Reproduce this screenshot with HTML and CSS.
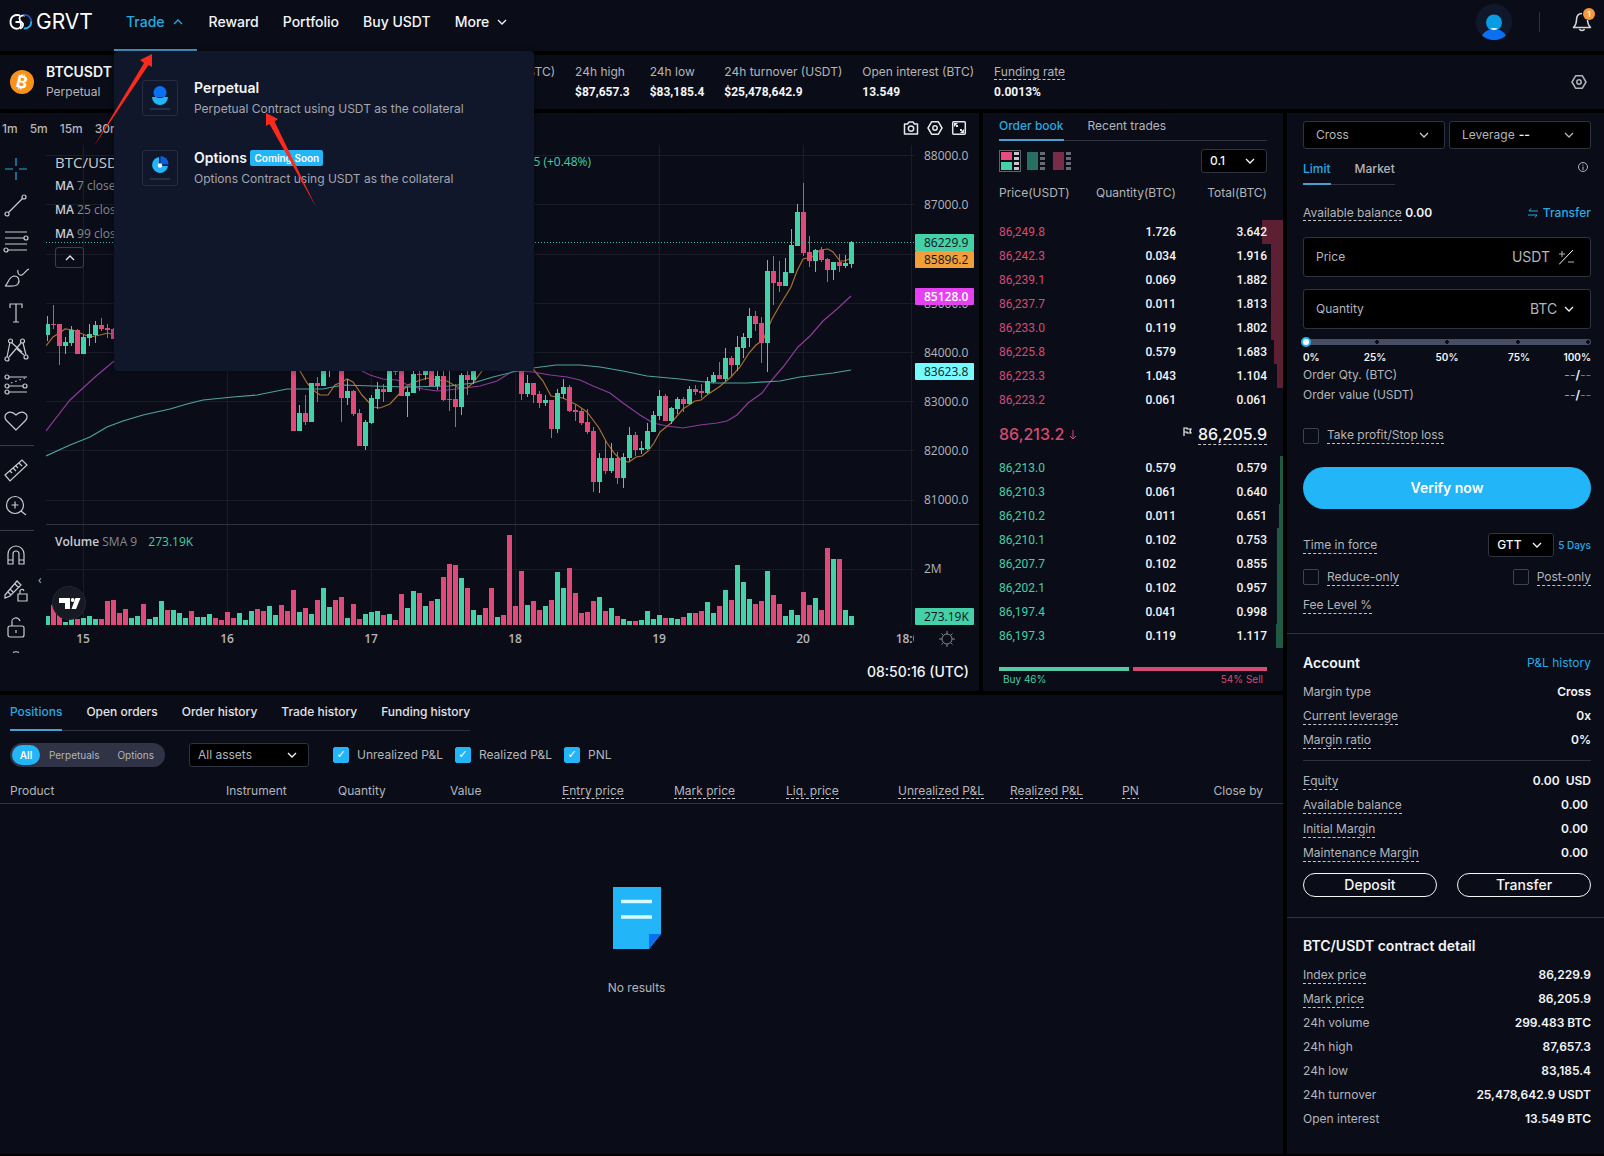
FILE: index.html
```html
<!DOCTYPE html>
<html lang="en">
<head>
    <meta charset="UTF-8">
    <meta name="viewport" content="width=device-width, initial-scale=1.0">
    <title>BTCUSDT Perpetual | GRVT</title>
    <link rel="stylesheet" href="styles.css">
</head>
<body>

    <!-- shared icons -->
    <svg class="sprite" aria-hidden="true">
        <symbol id="chevron" viewBox="0 0 10 10"><path d="M1 3l4 4 4-4" fill="none" stroke="currentColor" stroke-width="1.3"/></symbol>
        <symbol id="chevron-up" viewBox="0 0 10 10"><path d="M1 7l4-4 4 4" fill="none" stroke="currentColor" stroke-width="1.3"/></symbol>
        <symbol id="hex" viewBox="0 0 16 16"><path d="M4.6 1.8h6.8L15 8l-3.6 6.2H4.6L1 8z" fill="none" stroke="currentColor" stroke-width="1.5" stroke-linejoin="round"/><circle cx="8" cy="8" r="2.2" fill="none" stroke="currentColor" stroke-width="1.5"/></symbol>
    </svg>

    <header class="topbar">
        <a class="logo" href="#" aria-label="GRVT home">
            <svg width="24" height="18" viewBox="0 0 24 18" fill="none" stroke-width="1.8">
                <path d="M11 2.300C5 1 1.500 4 1.500 9s4 7.500 8 6.500c3-.8 3-4.500 1.500-6.500H6.500" stroke="#fff"/>
                <path d="M16 2.500c-5-.5-6.500 2-5 5 1.500 2.500 4 2 3 5-.5 1.800-1.500 2.700-3 3.200" stroke="#fff"/>
                <path d="M14.500 2C20 1.500 22.300 5 22.300 9" stroke="#2a4fb0"/>
                <path d="M22.300 8.500c0 4.500-3 7-7.500 7" stroke="#28b4f0"/>
            </svg>
            <span>GRVT</span>
        </a>
        <nav class="nav">
            <a class="nav-item active" href="#">Trade <svg width="10" height="10"><use href="#chevron-up"/></svg></a>
            <a class="nav-item" href="#">Reward</a>
            <a class="nav-item" href="#">Portfolio</a>
            <a class="nav-item" href="#">Buy USDT</a>
            <a class="nav-item" href="#">More <svg width="10" height="10"><use href="#chevron"/></svg></a>
        </nav>
        <div class="user">
            <button class="avatar" aria-label="Account">
                <svg width="36" height="36" viewBox="0 0 36 36">
                    <circle cx="18" cy="18" r="18" fill="#11182b"/>
                    <path d="M6 31.500a14 14 0 0 1 24 0A18 18 0 0 1 6 31.500z" fill="#0a6ff0"/>
                    <circle cx="18" cy="18.500" r="8" fill="#069ce6"/>
                    <path d="M14 24.800a12 12 0 0 1 8 0 8 8 0 0 1-8 0z" fill="#fff"/>
                </svg>
            </button>
            <span class="divider"></span>
            <button class="bell" aria-label="Notifications">
                <svg width="20" height="22" viewBox="0 0 20 22" fill="none" stroke="#d5d7dc" stroke-width="1.5" stroke-linejoin="round">
                    <path d="M10 2.500c-4 0-5.500 3-5.500 6.500 0 4-1 5.500-3 7.500h17c-2-2-3-3.500-3-7.500"/>
                    <path d="M7.500 18c.6 2 4.400 2 5 0"/>
                </svg>
                <span class="badge">1</span>
            </button>
        </div>
    </header>

    <section class="ticker">
        <div class="pair">
            <svg width="24" height="24" viewBox="0 0 24 24">
                <circle cx="12" cy="12" r="12" fill="#f7931a"/>
                <text class="btc-sign" x="12" y="18" text-anchor="middle" transform="rotate(14 12 12)">₿</text>
            </svg>
            <div>
                <h1>BTCUSDT</h1>
                <p>Perpetual</p>
            </div>
        </div>
        <dl class="stats">
            <div><dt>24h volume (BTC)</dt><dd>299.483</dd></div>
            <div><dt>24h high</dt><dd>$87,657.3</dd></div>
            <div><dt>24h low</dt><dd>$83,185.4</dd></div>
            <div><dt>24h turnover (USDT)</dt><dd>$25,478,642.9</dd></div>
            <div><dt>Open interest (BTC)</dt><dd>13.549</dd></div>
            <div><dt><span class="hint">Funding rate</span></dt><dd>0.0013%</dd></div>
        </dl>
        <button class="icon-button" aria-label="Layout settings"><svg width="16" height="16"><use href="#hex"/></svg></button>
    </section>

    <main class="workspace">

        <section class="panel chart">
            <div class="chart-toolbar">
                <div class="intervals">
                    <button>1m</button><button>5m</button><button>15m</button><button>30m</button>
                </div>
                <div class="chart-actions">
                    <button aria-label="Snapshot">
                        <svg width="16" height="16" viewBox="0 0 16 16" fill="none" stroke="currentColor" stroke-width="1.5" stroke-linejoin="round"><path d="M1.500 4h3L6 2h4l1.500 2h3v10h-13z"/><circle cx="8" cy="8.600" r="2.700"/></svg>
                    </button>
                    <button aria-label="Chart settings"><svg width="16" height="16"><use href="#hex"/></svg></button>
                    <button aria-label="Full screen">
                        <svg width="16" height="16" viewBox="0 0 16 16"><rect x="1.700" y="1.700" width="12.600" height="12.600" rx="1" fill="none" stroke="currentColor" stroke-width="1.500"/><path d="M3 3h4L3 7zM13 13H9l4-4zM5 5h2v2H5zM9 9h2v2H9z" fill="currentColor"/></svg>
                    </button>
                </div>
            </div>

            <div class="chart-body">
                <div class="tools">
                    <button class="blue" aria-label="Cross"><svg viewBox="0 0 28 28"><path d="M14 3v8M14 17v8M3 14h8M17 14h8"/></svg></button>
                    <button aria-label="Trend line"><svg viewBox="0 0 28 28"><path d="M6.500 21.500L20.500 7.500"/><circle cx="5" cy="23" r="2"/><circle cx="22" cy="6" r="2"/></svg></button>
                    <button aria-label="Fib retracement"><svg viewBox="0 0 28 28"><path d="M3 5h22M3 11h19M3 17h22M6 23h19"/><circle cx="24" cy="11" r="2"/><circle cx="4" cy="23" r="2"/></svg></button>
                    <button aria-label="Brush"><svg viewBox="0 0 28 28"><path d="M3 23c3-1 3-9 9-10 5 0 6 5 4 8-2 3-7 2-13 2zM16 7c-1 3 1 6 4 5 3-2 4-5 7-6"/></svg></button>
                    <button aria-label="Text"><svg viewBox="0 0 28 28"><path d="M8 9V5h12v4M14 5v18M11 23h6"/></svg></button>
                    <button aria-label="Patterns"><svg viewBox="0 0 28 28"><path d="M5 22L8 7M10 8l10 9M19 8L7 22M21 8l3 12M22 20l-7-6"/><circle cx="8.500" cy="6" r="2"/><circle cx="20.500" cy="6" r="2"/><circle cx="5" cy="24" r="2"/><circle cx="24" cy="22" r="2"/></svg></button>
                    <button aria-label="Forecast"><svg viewBox="0 0 28 28"><path d="M7 6h18M7 15h14M7 21h18"/><path d="M9 12l14-5" stroke-dasharray="1.500 3"/><circle cx="5" cy="6" r="2"/><circle cx="5" cy="15" r="2"/><circle cx="23" cy="15" r="2"/><circle cx="5" cy="21" r="2"/></svg></button>
                    <button aria-label="Icons"><svg viewBox="0 0 28 28"><path d="M14 23L4.500 13.500C-.5 8 7.500 1.500 14 8c6.500-6.500 14.500 0 9.500 5.500z"/></svg></button>
                    <hr>
                    <button aria-label="Measure"><svg viewBox="0 0 28 28"><path d="M3 19L20 4l5 5L8 25zM8 15l2 2M11 12l3 3M14 10l2 2M17 7l3 3"/></svg></button>
                    <button aria-label="Zoom in"><svg viewBox="0 0 28 28"><circle cx="13" cy="13" r="8.500"/><path d="M19 19l5 4M13 9.500v7M9.500 13h7"/></svg></button>
                    <hr>
                    <button aria-label="Magnet"><svg viewBox="0 0 28 28"><path d="M6 23V13a8 8 0 0 1 16 0v10h-5V13a3 3 0 0 0-6 0v10zM6 19h5M17 19h5"/></svg></button>
                    <button aria-label="Stay in drawing mode"><svg viewBox="0 0 28 28"><path d="M3 18L15 4l4 4L8 19l-5 2zM6 15l3 3M8 12l3 3M13 7l4 4M16 17h9v7h-9zM18 17v-2a2 2 0 0 1 4-1"/></svg></button>
                    <button aria-label="Lock drawings"><svg viewBox="0 0 28 28"><rect x="6" y="13" width="16" height="11" rx="2"/><path d="M10 13v-3a4 4 0 0 1 8-2M14 17v3"/></svg></button>
                    <button class="cut" aria-label="Hide drawings"><svg viewBox="0 0 28 28"><path d="M11 7.500c2-1 4-1 6 0"/></svg></button>
                </div>

                <svg id="plot" class="plot" role="img" aria-label="BTC/USDT candles and volume"></svg>
                <svg id="axis" class="axis" aria-hidden="true"></svg>

                <div class="legend">
                    <div class="legend-title"><span>BTC/USDT</span><span class="up">+412.5 (+0.48%)</span></div>
                    <div class="legend-row"><b>MA</b> 7 close</div>
                    <div class="legend-row"><b>MA</b> 25 close</div>
                    <div class="legend-row"><b>MA</b> 99 close</div>
                    <button aria-label="Collapse legend"><svg width="10" height="10"><use href="#chevron-up"/></svg></button>
                </div>
                <div class="volume-legend"><b>Volume</b> SMA 9 <span class="up">273.19K</span></div>
                <span class="collapse">‹</span>
                <svg class="tv-logo" width="34" height="34" viewBox="0 0 34 34">
                    <circle cx="17" cy="17" r="16.500" fill="#171a23" stroke="#252833"/>
                    <rect x="7" y="12" width="11" height="5" fill="#fff"/>
                    <rect x="13" y="12" width="5" height="11" fill="#fff"/>
                    <circle cx="20.700" cy="14" r="1.900" fill="#fff"/>
                    <path d="M23.500 12h5L24 23h-4.500z" fill="#fff"/>
                </svg>
            </div>
            <div class="clock">08:50:16 (UTC)</div>
        </section>

        <section class="panel book">
            <div class="tabs book-tabs">
                <button class="active">Order book</button>
                <button>Recent trades</button>
            </div>
            <div class="book-controls">
                <button class="mode active" aria-label="Both sides"><i class="stack"><b class="red"></b><b class="green"></b></i><i class="dots"></i></button>
                <button class="mode" aria-label="Bids"><i class="stack"><b class="green"></b></i><i class="dots"></i></button>
                <button class="mode" aria-label="Asks"><i class="stack"><b class="red"></b></i><i class="dots"></i></button>
                <span class="select tick">
                    <select aria-label="Price grouping"><option>0.1</option></select>
                    <svg width="10" height="10"><use href="#chevron"/></svg>
                </span>
            </div>
            <table class="levels">
                <thead>
                    <tr><th>Price(USDT)</th><th>Quantity(BTC)</th><th>Total(BTC)</th></tr>
                </thead>
                <tbody id="asks" class="asks"></tbody>
            </table>
            <div class="mid">
                <span class="last">86,213.2 <svg width="8" height="10" viewBox="0 0 8 10" fill="none" stroke="currentColor"><path d="M4 0v9M1 6l3 3 3-3"/></svg></span>
                <span class="mark"><svg width="9" height="9" viewBox="0 0 9 9" fill="none" stroke="currentColor" stroke-width="1.2"><path d="M1 9V1h3v1h4L7 4l1 2H4V5H1"/></svg><span class="hint">86,205.9</span></span>
            </div>
            <table class="levels">
                <tbody id="bids" class="bids"></tbody>
            </table>
            <div class="ratio"><span class="buy"></span><span class="sell"></span></div>
            <div class="ratio-labels"><span class="up">Buy 46%</span><span class="down">54% Sell</span></div>
        </section>

        <aside class="panel side">
            <form class="order">
                <div class="pair-row">
                    <span class="select wide">
                        <select aria-label="Margin mode"><option>Cross</option></select>
                        <svg width="10" height="10"><use href="#chevron"/></svg>
                    </span>
                    <button type="button" class="drop">Leverage <b>--</b><svg width="10" height="10"><use href="#chevron"/></svg></button>
                </div>
                <div class="type-row">
                    <div class="tabs">
                        <button type="button" class="active">Limit</button>
                        <button type="button">Market</button>
                    </div>
                    <svg class="info" width="10" height="10" viewBox="0 0 10 10" fill="none" stroke="currentColor"><circle cx="5" cy="5" r="4.500"/><path d="M5 4.500V8M5 2.500v1"/></svg>
                </div>
                <div class="line balance">
                    <span><span class="hint">Available balance</span> <b>0.00</b></span>
                    <a href="#"><svg width="10" height="10" viewBox="0 0 10 10" fill="none" stroke="currentColor"><path d="M10 3H1l2-2.500M0 7h9L7 9.500"/></svg>Transfer</a>
                </div>
                <div class="field">
                    <input type="text" placeholder="Price" aria-label="Price">
                    <span>USDT</span>
                    <svg width="15" height="15" viewBox="0 0 15 15" fill="none" stroke="currentColor"><path d="M0 14.500L14 0" stroke="#fff"/><path d="M0 4h6M3 1v6M9 12h6"/></svg>
                </div>
                <div class="field">
                    <input type="text" placeholder="Quantity" aria-label="Quantity">
                    <span class="select unit">
                        <select aria-label="Unit"><option>BTC</option></select>
                        <svg width="10" height="10"><use href="#chevron"/></svg>
                    </span>
                </div>
                <input class="slider" type="range" min="0" max="100" value="0" aria-label="Order size">
                <div class="marks"><span>0%</span><span>25%</span><span>50%</span><span>75%</span><span>100%</span></div>
                <div class="line small-line"><span>Order Qty. (BTC)</span><b><i class="up">--</i>/<i class="down">--</i></b></div>
                <div class="line small-line"><span>Order value (USDT)</span><b><i class="up">--</i>/<i class="down">--</i></b></div>
                <label class="check tpsl"><input type="checkbox"><span class="hint">Take profit/Stop loss</span></label>
                <button type="button" class="verify">Verify now</button>
                <div class="line force">
                    <span class="hint">Time in force</span>
                    <span class="force-value">
                        <span class="select tick">
                            <select aria-label="Time in force"><option>GTT</option></select>
                            <svg width="10" height="10"><use href="#chevron"/></svg>
                        </span>
                        <a href="#">5 Days</a>
                    </span>
                </div>
                <div class="line only">
                    <label class="check"><input type="checkbox"><span class="hint">Reduce-only</span></label>
                    <label class="check"><input type="checkbox"><span class="hint">Post-only</span></label>
                </div>
                <div class="line"><span class="hint">Fee Level %</span></div>
            </form>

            <section class="block">
                <div class="block-title"><h2>Account</h2><a href="#">P&amp;L history</a></div>
                <div class="line"><span>Margin type</span><b>Cross</b></div>
                <div class="line"><span class="hint">Current leverage</span><b>0x</b></div>
                <div class="line"><span class="hint">Margin ratio</span><b>0%</b></div>
                <hr>
                <div class="line"><span class="hint">Equity</span><b>0.00&nbsp; USD</b></div>
                <div class="line"><span class="hint">Available balance</span><b>0.00&nbsp;</b></div>
                <div class="line"><span class="hint">Initial Margin</span><b>0.00&nbsp;</b></div>
                <div class="line"><span class="hint">Maintenance Margin</span><b>0.00&nbsp;</b></div>
                <div class="actions"><button>Deposit</button><button>Transfer</button></div>
            </section>

            <section class="block">
                <div class="block-title"><h2>BTC/USDT contract detail</h2></div>
                <div class="line"><span class="hint">Index price</span><b>86,229.9</b></div>
                <div class="line"><span class="hint">Mark price</span><b>86,205.9</b></div>
                <div class="line"><span>24h volume</span><b>299.483 BTC</b></div>
                <div class="line"><span>24h high</span><b>87,657.3</b></div>
                <div class="line"><span>24h low</span><b>83,185.4</b></div>
                <div class="line"><span>24h turnover</span><b>25,478,642.9 USDT</b></div>
                <div class="line"><span>Open interest</span><b>13.549 BTC</b></div>
            </section>
        </aside>

        <section class="panel positions">
            <div class="tabs position-tabs">
                <button class="active">Positions</button>
                <button>Open orders</button>
                <button>Order history</button>
                <button>Trade history</button>
                <button>Funding history</button>
            </div>
            <div class="filters">
                <div class="segment">
                    <button class="active">All</button><button>Perpetuals</button><button>Options</button>
                </div>
                <span class="select assets">
                    <select aria-label="Assets"><option>All assets</option></select>
                    <svg width="10" height="10"><use href="#chevron"/></svg>
                </span>
                <label class="check"><input type="checkbox" checked>Unrealized P&amp;L</label>
                <label class="check"><input type="checkbox" checked>Realized P&amp;L</label>
                <label class="check"><input type="checkbox" checked>PNL</label>
            </div>
            <table class="position-table">
                <thead>
                    <tr>
                        <th class="product">Product</th>
                        <th>Instrument</th>
                        <th>Quantity</th>
                        <th>Value</th>
                        <th><span class="hint">Entry price</span></th>
                        <th><span class="hint">Mark price</span></th>
                        <th><span class="hint">Liq. price</span></th>
                        <th><span class="hint">Unrealized P&amp;L</span></th>
                        <th><span class="hint">Realized P&amp;L</span></th>
                        <th class="pnl"><span class="hint">PNL</span></th>
                        <th class="close">Close by</th>
                    </tr>
                </thead>
            </table>
            <div class="empty">
                <svg width="48" height="62" viewBox="0 0 48 62">
                    <path d="M0 0h48v47L36 62H0z" fill="#22b5f7"/>
                    <path d="M36 47h12L36 62z" fill="#0a6ff0"/>
                    <path d="M8 14.500h31M8 30h31" stroke="#d8fbff" stroke-width="3.500"/>
                </svg>
                <p>No results</p>
            </div>
        </section>
    </main>

    <!-- Trade menu -->
    <div class="menu">
        <a class="menu-item" href="#">
            <span class="menu-icon">
                <svg width="20" height="24" viewBox="0 0 20 24"><circle cx="10" cy="6.500" r="6.500" fill="#0a6ff0"/><path d="M2 11h16a8 8 0 0 1-16 0z" fill="#22b5f7"/><path d="M6 11h8c-2 1.300-6 1.300-8 0z" fill="#02153c"/><path d="M0 23h20" stroke="#1f3048" stroke-width="2"/></svg>
            </span>
            <span><strong>Perpetual</strong><small>Perpetual Contract using USDT as the collateral</small></span>
        </a>
        <a class="menu-item" href="#">
            <span class="menu-icon">
                <svg width="20" height="24" viewBox="0 0 20 24"><path d="M9 1v9h9a8 8 0 1 1-9-9z" fill="#22b5f7"/><path d="M10.500 0a8 8 0 0 1 8 8.500h-8z" fill="#0a5fe0"/><circle cx="10" cy="9.500" r="2.200" fill="#fff"/><path d="M0 23h20" stroke="#1f3048" stroke-width="2"/></svg>
            </span>
            <span><strong>Options <em>Coming Soon</em></strong><small>Options Contract using USDT as the collateral</small></span>
        </a>
    </div>

    <!-- guide arrows -->
    <svg class="arrows" width="330" height="215" viewBox="0 0 330 215" fill="#fb2a1d" aria-hidden="true">
        <path d="M152 54L152 67 148.500 65 94 146 144 63 140 60z"/>
        <path d="M266 113L278 119 274.500 121.500 316 207 269.500 124 266 126z"/>
    </svg>

    <script src="script.js"></script>
</body>
</html>
```
FILE: styles.css
```css
* {
    box-sizing: border-box;
}
body {
    margin: 0;
    min-height: 100vh;
    display: flex;
    flex-direction: column;
    gap: 4px;
    background: #000;
    color: #b3b5ba;
    font-family: Inter, "Liberation Sans", sans-serif;
    font-size: 12px;
    line-height: 16px;
}
h1, h2, p, dl, dd {
    margin: 0;
}
button, input, select {
    font: inherit;
    color: inherit;
    background: none;
    border: none;
    padding: 0;
    margin: 0;
}
button {
    cursor: pointer;
}
a {
    color: #27aae1;
    text-decoration: none;
}
b {
    color: #f4f5f7;
    font-weight: 600;
}
.sprite {
    display: none;
}
.up {
    color: #45cfa5;
}
.down {
    color: #d54a75;
}
.hint {
    border-bottom: 1px dashed #c4c6ca;
}

/* header */
.topbar {
    height: 51px;
    display: flex;
    align-items: center;
    padding: 0 12px 8px 9px;
    background: #0a0d17;
}
.logo {
    width: 105px;
    display: flex;
    align-items: center;
    gap: 3px;
    color: #fff;
    font-size: 21px;
    line-height: 20px;
}
.nav {
    display: flex;
    align-self: stretch;
}
.nav-item {
    height: 51px;
    padding: 0 12px 8px;
    display: flex;
    align-items: center;
    gap: 8px;
    color: #f4f5f7;
    font-size: 14px;
    font-weight: 500;
}
.nav-item.active {
    padding-right: 14px;
    border-bottom: 2px solid #4a9fd0;
    padding-bottom: 6px;
    color: #27aae1;
}
.user {
    margin-left: auto;
    display: flex;
    align-items: center;
}
.avatar, .avatar svg, .bell svg {
    display: block;
}
.divider {
    width: 1px;
    height: 20px;
    margin: 0 32px 0 27px;
    background: #2e323f;
}
.bell {
    position: relative;
}
.badge {
    position: absolute;
    top: -3px;
    right: -3px;
    width: 12px;
    height: 12px;
    border-radius: 50%;
    background: #f9983a;
    color: #fff;
    font-size: 8px;
    line-height: 12px;
    font-weight: 600;
}

/* ticker */
.ticker {
    height: 54px;
    display: flex;
    align-items: center;
    padding: 0 17px 0 10px;
    background: #0a0d17;
}
.pair {
    flex: 0 0 443px;
    display: flex;
    align-items: center;
    gap: 12px;
}
.pair h1 {
    color: #f4f5f7;
    font-size: 14px;
    line-height: 20px;
    font-weight: 600;
}
.pair p {
    line-height: 20px;
}
.btc-sign {
    fill: #fff;
    font-size: 17px;
    font-weight: 700;
}
.stats {
    display: flex;
    gap: 20px;
}
.stats div {
    line-height: 20px;
    white-space: nowrap;
}
.stats dd {
    color: #f4f5f7;
    font-family: Roboto, "Liberation Sans", sans-serif;
    font-weight: 700;
}
.icon-button {
    margin-left: auto;
}
.icon-button svg {
    display: block;
}

/* layout */
.workspace {
    flex: 1;
    display: grid;
    grid-template-columns: minmax(0, 1fr) 300px 317px;
    grid-template-rows: auto 1fr;
    gap: 4px;
    padding-bottom: 2px;
}
.panel {
    background: #0a0d17;
}
.side {
    grid-column: 3;
    grid-row: 1 / 3;
}
.positions {
    grid-column: 1 / 3;
}

/* tabs */
.tabs {
    display: flex;
    align-items: flex-start;
    gap: 24px;
    box-shadow: inset 0 -1px #2e323f;
}
.tabs button {
    padding-bottom: 8px;
    font-weight: 500;
}
.tabs .active {
    border-bottom: 2px solid #4a9fd0;
    color: #27aae1;
}

/* drop-downs */
.select {
    position: relative;
    display: block;
}
.select select {
    display: block;
    width: 100%;
    height: 24px;
    padding: 0 8px;
    appearance: none;
    border: 1px solid #2e3342;
    border-radius: 3px;
    background: #000;
}
.select svg {
    position: absolute;
    right: 12px;
    top: calc(50% - 5px);
    color: #f4f5f7;
    pointer-events: none;
}
.tick {
    width: 66px;
}
.tick select {
    color: #f4f5f7;
    font-weight: 500;
}

/* chart */
.chart-toolbar {
    height: 32px;
    display: flex;
    align-items: center;
    justify-content: space-between;
    padding: 0 12px 2px 2px;
}
.intervals {
    display: flex;
    gap: 12px;
    padding-top: 2px;
    font-weight: 500;
}
.chart-actions {
    display: flex;
    gap: 8px;
    color: #e6e7ea;
}
.chart-actions svg {
    display: block;
}
.chart-body {
    position: relative;
    height: 510px;
    display: flex;
    font-family: "Open Sans", "Noto Sans", sans-serif;
}
.tools {
    width: 46px;
    padding-top: 6px;
    overflow: hidden;
}
.tools button {
    display: block;
    height: 36px;
    padding: 4px 2px;
    color: #c9cbd1;
}
.tools .blue {
    color: #27aae1;
}
.tools svg {
    display: block;
    width: 28px;
    height: 28px;
    fill: none;
    stroke: currentColor;
    stroke-width: 1.2;
}
.tools hr {
    width: 34px;
    margin: 6px 0;
    border: none;
    border-top: 1px solid #3a3e4b;
}
.tools .cut {
    height: 16px;
    padding-top: 0;
}
.plot {
    flex: 1;
    min-width: 0;
    height: 510px;
}
.axis {
    flex: 0 0 65px;
    width: 65px;
    height: 510px;
}
.plot text, .axis text {
    fill: #b3b5ba;
    font-size: 12px;
}
.plot text {
    font-weight: 600;
    text-anchor: middle;
}
.axis .on-tag {
    fill: #10151c;
}
.axis .on-dark {
    fill: #fff;
    font-weight: 600;
}
.legend {
    position: absolute;
    left: 55px;
    top: 7px;
    width: 536px;
}
.legend-title {
    display: flex;
    justify-content: space-between;
    margin-bottom: 2px;
    line-height: 20px;
    color: #c9cbd1;
}
.legend-title span:first-child {
    font-size: 15px;
}
.legend-row, .volume-legend {
    line-height: 24px;
    color: #858891;
}
.legend b, .volume-legend b {
    color: #c9cbd1;
}
.legend button {
    width: 29px;
    height: 21px;
    margin-top: 1px;
    border: 1px solid #3a3e4b;
    border-radius: 3px;
    color: #e6e7ea;
}
.legend button svg {
    display: block;
    margin: 0 auto;
}
.volume-legend {
    position: absolute;
    left: 55px;
    top: 385px;
}
.volume-legend .up {
    margin-left: 8px;
}
.collapse {
    position: absolute;
    left: 38px;
    top: 427px;
}
.tv-logo {
    position: absolute;
    left: 52px;
    top: 441px;
}
.clock {
    padding: 7px 10px 9px;
    text-align: right;
    color: #f4f5f7;
    font-size: 14px;
    line-height: 20px;
    font-weight: 500;
}

/* order book */
.book-tabs {
    margin: 5px 16px 8px;
}
.book-tabs button {
    padding-bottom: 5px;
}
.book-tabs button:not(.active) {
    font-weight: 400;
}
.book-controls {
    display: flex;
    align-items: center;
    gap: 4px;
    margin: 0 16px 8px;
}
.book-controls .tick {
    margin-left: auto;
}
.mode {
    width: 22px;
    height: 22px;
    padding: 1px;
    display: flex;
    gap: 2px;
    border: 1px solid transparent;
    opacity: 0.5;
}
.mode.active {
    border-color: #5d626f;
    opacity: 1;
}
.stack {
    width: 11px;
    height: 18px;
    display: flex;
    flex-direction: column;
    gap: 2px;
}
.stack b {
    flex: 1;
}
.red {
    background: #e84b7c;
}
.green {
    background: #45d1a8;
}
.dots {
    width: 5px;
    height: 18px;
    background: repeating-linear-gradient(#c4c6ca 0 3px, transparent 3px 5px);
}
.levels {
    width: 100%;
    table-layout: fixed;
    border-collapse: collapse;
}
.levels th, .levels td {
    height: 24px;
    padding: 0;
    text-align: right;
    color: #f4f5f7;
    font-weight: 500;
}
.levels td {
    font-family: Roboto, "Liberation Sans", sans-serif;
}
.levels th {
    height: 39px;
    padding-bottom: 15px;
    color: #b3b5ba;
    font-weight: 400;
}
.levels :is(th, td):first-child {
    width: 103px;
    padding-left: 16px;
    text-align: left;
    font-weight: 400;
}
.levels :is(th, td):nth-child(2) {
    width: 90px;
}
.levels :is(th, td):last-child {
    padding-right: 16px;
}
.asks tr {
    background: linear-gradient(#5c1f34, #5c1f34) no-repeat right / var(--depth) 100%;
}
.bids tr {
    background: linear-gradient(#1f5946, #1f5946) no-repeat right / var(--depth) 100%;
}
.asks td:first-child {
    color: #d54a75;
}
.bids td:first-child {
    color: #45cfa5;
}
.mid {
    display: flex;
    justify-content: space-between;
    padding: 12px 16px;
    font-size: 16px;
    line-height: 20px;
    font-weight: 500;
}
.mid .last {
    color: #d54a75;
}
.mid .mark {
    color: #f4f5f7;
}
.mark svg {
    margin: 0 6px 4px 0;
}
.ratio {
    display: flex;
    gap: 4px;
    height: 4px;
    margin: 19px 16px 0;
}
.ratio .buy {
    flex: 130;
    background: #55c9a6;
}
.ratio .sell {
    flex: 134;
    background: #d54a75;
}
.ratio-labels {
    display: flex;
    justify-content: space-between;
    padding: 0 20px;
    font-size: 10px;
}

/* order form */
.order {
    padding: 8px 13px 16px 16px;
    border-bottom: 1px solid #2e323f;
}
.pair-row {
    display: grid;
    grid-template-columns: 1fr 1fr;
    gap: 4px;
}
.wide select, .drop {
    height: 28px;
    padding: 0 12px;
}
.wide svg {
    right: 16px;
    color: #c9cbd1;
}
.drop {
    display: flex;
    align-items: center;
    gap: 4px;
    padding-right: 16px;
    border: 1px solid #2e3342;
    border-radius: 3px;
    background: #000;
}
.drop svg {
    margin-left: auto;
}
.type-row {
    display: flex;
    justify-content: space-between;
    align-items: flex-start;
    margin: 12px 0 16px;
}
.type-row .tabs button {
    padding-bottom: 6px;
}
.info {
    margin: 1px 3px 0;
}
.line {
    display: flex;
    align-items: center;
    justify-content: space-between;
    height: 24px;
}
.line i {
    font-style: normal;
    font-weight: 400;
}
.balance {
    margin-bottom: 12px;
}
.balance a {
    display: flex;
    align-items: center;
    gap: 5px;
    font-weight: 500;
}
.field {
    display: flex;
    align-items: center;
    height: 40px;
    padding: 0 16px 0 12px;
    margin-bottom: 12px;
    border: 1px solid #2e3342;
    border-radius: 3px;
    background: #000;
    font-size: 14px;
}
.field input {
    flex: 1;
    min-width: 0;
    font-size: 12px;
    outline: none;
}
.field input::placeholder {
    color: #b3b5ba;
}
.field > svg {
    margin-left: 9px;
}
.unit select {
    border: none;
    padding: 0 16px 0 0;
}
.unit svg {
    right: 0;
}
.slider {
    display: block;
    width: 100%;
    height: 10px;
    margin-top: -4px;
    appearance: none;
}
.slider::-webkit-slider-runnable-track {
    height: 6px;
    border-radius: 3px;
    background:
        radial-gradient(circle, #0a0d17 2px, transparent 2px) 25% 0 / 6px 6px no-repeat,
        radial-gradient(circle, #0a0d17 2px, transparent 2px) 50% 0 / 6px 6px no-repeat,
        radial-gradient(circle, #0a0d17 2px, transparent 2px) 75% 0 / 6px 6px no-repeat,
        radial-gradient(circle, #0a0d17 2px, transparent 2px) 100% 0 / 6px 6px no-repeat,
        #474d63;
}
.slider::-webkit-slider-thumb {
    appearance: none;
    width: 10px;
    height: 10px;
    margin: -2px 0 0 -2px;
    border: 2px solid #22b5f7;
    border-radius: 50%;
    background: #fff;
}
.marks {
    display: grid;
    grid-template-columns: 1fr 2fr 2fr 2fr 1fr;
    margin-top: 2px;
    color: #f4f5f7;
    font-size: 10px;
    font-weight: 600;
    text-align: center;
}
.marks span:first-child {
    text-align: left;
}
.marks span:last-child {
    text-align: right;
}
.small-line {
    height: 20px;
}
.check {
    display: flex;
    align-items: center;
    gap: 8px;
}
.check input {
    width: 16px;
    height: 16px;
    appearance: none;
    border: 1px solid #3d4354;
    border-radius: 2px;
}
.check input:checked {
    border-color: #22b5f7;
    background: #22b5f7;
}
.check input:checked::before {
    content: "✓";
    display: block;
    color: #fff;
    font: 11px/14px "DejaVu Sans", sans-serif;
    text-align: center;
}
.tpsl {
    margin-top: 22px;
}
.verify {
    display: block;
    width: 100%;
    height: 42px;
    margin: 23px 0 24px;
    border-radius: 21px;
    background: #22b5f7;
    color: #fff;
    font-size: 14px;
    font-weight: 600;
}
.force-value {
    display: flex;
    align-items: center;
    gap: 4px;
}
.force-value a {
    font-size: 10px;
    font-weight: 500;
}
.only {
    margin: 8px 0 4px;
}

/* account and contract blocks */
.block {
    padding: 17px 13px 20px 16px;
}
.block + .block {
    padding-top: 16px;
    border-top: 1px solid #2e323f;
}
.block-title {
    display: flex;
    align-items: center;
    justify-content: space-between;
    height: 24px;
    margin-bottom: 5px;
}
.block h2 {
    color: #f4f5f7;
    font-size: 14px;
    font-weight: 600;
}
.block hr {
    margin: 8px 0;
    border: none;
    border-top: 1px solid #2e323f;
}
.actions {
    display: grid;
    grid-template-columns: 1fr 1fr;
    gap: 20px;
    margin-top: 8px;
}
.actions button {
    height: 24px;
    border: 1px solid #f4f5f7;
    border-radius: 12px;
    color: #f4f5f7;
    font-size: 14px;
    font-weight: 500;
}

/* positions */
.position-tabs {
    width: fit-content;
    margin: 9px 10px 12px;
    color: #e1e3e6;
}
.position-tabs button {
    padding-bottom: 9px;
}
.filters {
    display: flex;
    align-items: center;
    height: 24px;
    margin: 0 10px;
}
.segment {
    display: flex;
    width: 155px;
    height: 24px;
    padding: 2px;
    margin-right: 24px;
    border-radius: 12px;
    background: #2f3345;
    font-size: 10px;
}
.segment button {
    flex: 1 0 auto;
}
.segment .active {
    flex: 0 0 28px;
    border-radius: 10px;
    background: #22b5f7;
    color: #fff;
    font-weight: 600;
}
.assets {
    width: 120px;
    margin-right: 24px;
}
.filters .check {
    margin-right: 12px;
}
.position-table {
    width: 100%;
    margin-top: 12px;
    table-layout: fixed;
    border-collapse: collapse;
}
.position-table th {
    width: 112px;
    height: 24px;
    padding: 0;
    border-bottom: 1px solid #2e323f;
    font-weight: 400;
    text-align: left;
    white-space: nowrap;
}
.position-table .product {
    width: 226px;
    padding-left: 10px;
}
.position-table .pnl {
    width: 17px;
    overflow: hidden;
}
.position-table .close {
    width: auto;
    padding-right: 20px;
    text-align: right;
}
.empty {
    padding: 83px 20px 0 10px;
    text-align: center;
}
.empty svg {
    display: block;
    margin: 0 auto 31px;
}

/* trade menu */
.menu {
    position: absolute;
    left: 114px;
    top: 51px;
    width: 420px;
    height: 320px;
    padding: 26px 28px;
    border-radius: 4px;
    background: #11172a;
    box-shadow: 0 0 6px rgba(0, 0, 0, 0.4);
}
.menu-item {
    display: flex;
    align-items: center;
    gap: 16px;
    height: 42px;
    margin-bottom: 28px;
}
.menu-icon {
    width: 36px;
    height: 36px;
    display: grid;
    place-items: center;
    border: 1px solid #262d40;
    border-radius: 3px;
}
.menu-item strong, .menu-item small {
    display: block;
    line-height: 20px;
}
.menu-item strong {
    color: #f4f5f7;
    font-size: 14px;
    font-weight: 600;
}
.menu-item small {
    margin-top: 1px;
    color: #a3a6ae;
    font-size: 12px;
}
.menu-item em {
    display: inline-block;
    padding: 0 4px;
    border-radius: 2px;
    background: #22b5f7;
    color: #fff;
    font-size: 10px;
    font-style: normal;
    line-height: 16px;
    vertical-align: 1px;
}
.arrows {
    position: absolute;
    left: 0;
    top: 0;
    pointer-events: none;
}
```
FILE: script.js
```js
const UP = '#45d1a8';
const DOWN = '#df4a78';

// volume bar heights, negative for a falling candle
const volumes = [
    9, -20, -10, 3, 6, -6, 7, 9, 6, -6, -24, -25, -12, -16, 7, 9, -21, 6, 8, 24,
    -15, 15, 12, 7, -14, 8, 8, 11, -7, -5, -13, -7, 12, 5, 14, -16, -14, 19, 10, -20,
    -14, -35, 13, -17, 11, -25, 37, 18, -25, -28, 7, -21, -6, 11, 13, 14, -10, 11, -5, -31,
    17, 34, -32, 19, -24, 26, -48, -61, -60, 47, -37, 15, 10, -17, -37, 8, -10, -90, -19, -54,
    20, -24, -15, 19, -25, 53, 37, -57, -32, -12, -13, -24, 28, -14, 17, -9, 6, 4, -4, 5,
    14, 6, 10, -7, 7, 6, -8, 12, -12, -14, 23, 12, -19, 35, -25, 60, 43, 26, -21, -24,
    54, -30, -21, 9, 15, 10, -33, -20, 27, -15, -77, 66, -66, 15, 9
];

// first bar index, then [high, body top, body bottom, low] for each bar
const candles = {
    0: [[171, 179, 190, 196], [160, 179, 180, 184], [179, 179, 201, 220], [192, 197, 201, 209], [181, 185, 198, 201],
        [184, 185, 209, 209], [190, 192, 209, 209], [179, 189, 193, 201], [176, 180, 190, 198], [173, 180, 184, 186],
        [179, 183, 185, 193], [183, 184, 194, 194]],
    41: [[200, 200, 286, 286], [260, 268, 286, 286], [250, 268, 277, 280], [238, 238, 277, 277], [232, 238, 241, 257],
        [220, 225, 241, 241], [215, 218, 222, 232], [210, 212, 220, 222], [215, 220, 253, 277], [234, 246, 253, 260],
        [245, 246, 269, 271], [264, 268, 301, 301], [275, 277, 301, 305], [250, 253, 278, 279], [237, 244, 254, 264],
        [239, 244, 247, 257], [220, 222, 247, 247], [215, 218, 227, 230], [220, 222, 251, 251], [242, 247, 251, 272],
        [225, 229, 248, 248], [222, 229, 230, 246], [215, 222, 230, 235], [215, 220, 241, 242], [225, 231, 241, 245],
        [226, 231, 255, 256], [224, 254, 255, 266], [239, 254, 262, 282], [228, 230, 262, 270], [224, 230, 235, 250],
        [215, 220, 235, 239]],
    79: [[220, 222, 249, 255], [230, 238, 249, 252], [238, 238, 250, 258], [246, 249, 258, 263], [250, 255, 258, 261],
        [255, 255, 284, 293], [244, 248, 284, 288], [234, 242, 249, 254], [240, 242, 266, 267], [260, 265, 267, 276],
        [264, 266, 278, 280], [264, 277, 287, 289], [282, 286, 337, 347], [308, 313, 337, 348], [295, 313, 326, 329],
        [298, 313, 326, 328], [307, 313, 333, 339], [308, 312, 333, 343], [282, 290, 313, 316], [287, 290, 305, 311],
        [296, 303, 305, 309], [278, 286, 304, 305], [266, 270, 287, 287], [245, 251, 271, 275], [249, 251, 276, 276],
        [262, 263, 276, 279], [252, 254, 264, 269], [252, 254, 259, 267], [241, 244, 259, 260], [240, 244, 247, 250],
        [239, 246, 248, 253], [232, 236, 248, 249], [227, 230, 237, 238], [217, 230, 234, 234], [203, 213, 234, 236],
        [211, 213, 220, 231], [191, 202, 220, 226], [188, 192, 203, 213], [163, 171, 193, 202], [166, 171, 179, 186],
        [172, 178, 198, 218], [115, 126, 198, 227], [111, 126, 138, 160], [116, 137, 141, 147], [113, 127, 141, 141],
        [84, 100, 128, 128], [59, 67, 101, 101], [38, 67, 108, 111], [91, 107, 116, 122], [104, 105, 116, 127],
        [102, 105, 115, 117], [113, 114, 125, 137], [117, 117, 125, 135], [109, 117, 121, 127], [110, 118, 121, 123],
        [96, 97, 119, 123]]
};

const averages = [
    ['#a8702f', '0,201 7,192 15,187 19,184 27,185 34,188 44,192 54,190 62,188 68,190'],
    ['#a8702f', '254,226 261,238 267,245 274,250 282,250 289,240 296,237 301,234 307,237 316,250 327,262 334,263 344,259 354,248 362,240 372,236 381,233 391,235 401,236 411,242 421,243 427,238 436,226'],
    ['#a8702f', '487,224 497,236 505,251 517,253 531,260 541,267 553,283 561,298 569,309 576,316 583,317 590,312 596,311 602,306 608,298 614,287 625,278 637,264 649,256 655,255 661,250 673,242 685,232 694,222 703,208 710,200 717,195 726,174 734,160 745,142 751,126 757,114 766,112 774,105 782,104 787,107 794,116 799,116 805,113'],
    ['#8d3a9c', '0,286 24,255 49,232 68,216'],
    ['#8d3a9c', '316,226 324,230 337,234 351,235 364,241 377,244 391,246 411,244 434,241 451,236 467,226 487,227 504,230 521,232 534,235 547,241 564,248 577,258 594,270 607,278 621,281 637,283 654,280 671,278 681,276 691,270 702,258 716,248 724,237 737,222 752,202 764,191 777,176 791,164 805,151'],
    ['#4fa3a0', '0,311 24,300 44,292 61,282 77,276 97,270 124,264 141,259 157,255 187,252 211,250 241,244 277,244 297,240 327,241 361,242 404,241 427,238 447,232 471,226 487,223 510,220 534,220 554,222 577,226 601,231 634,234 667,238 701,238 734,236 754,232 787,228 805,225']
];

function drawPlot() {
    let out = '';

    [10, 59, 109, 158, 207, 256, 305, 355, 424].forEach(y => {
        out += `<rect x="0" y="${y}" width="100%" height="1" fill="#1a1d27"/>`;
    });
    [['15', 37], ['16', 181], ['17', 325], ['18', 469], ['19', 613], ['20', 757], ['18:00', 865]].forEach(([label, x]) => {
        out += `<rect x="${x}" y="0" width="1" height="480" fill="#1a1d27"/>`;
        out += `<text x="${x}" y="498">${label}</text>`;
    });
    out += '<rect x="0" y="379" width="100%" height="1" fill="#2e323f"/>';

    volumes.forEach((v, i) => {
        const height = Math.abs(v);
        out += `<rect x="${i * 6 - 1}" y="${480 - height}" width="5" height="${height}" fill="${v > 0 ? UP : DOWN}"/>`;
    });

    averages.forEach(([color, points]) => {
        out += `<polyline points="${points}" fill="none" stroke="${color}" stroke-width="1.2"/>`;
    });

    Object.entries(candles).forEach(([start, bars]) => {
        bars.forEach(([high, top, bottom, low], n) => {
            const i = Number(start) + n;
            const color = volumes[i] > 0 ? UP : DOWN;
            out += `<rect x="${i * 6 + 1}" y="${high}" width="1" height="${low - high}" fill="${color}"/>`;
            out += `<rect x="${i * 6 - 1}" y="${top}" width="5" height="${bottom - top}" fill="${color}"/>`;
        });
    });

    out += `<line x1="0" y1="97.5" x2="100%" y2="97.5" stroke="#4fb8a0" stroke-dasharray="1 2"/>`;
    document.getElementById('plot').innerHTML = out;
}

function drawAxis() {
    const labels = [['88000.0', 10], ['87000.0', 59], ['85000.0', 158], ['84000.0', 207], ['83000.0', 256], ['82000.0', 305], ['81000.0', 354], ['2M', 423]];
    const tags = [
        ['86229.9', 89, UP, 'on-tag'],
        ['85896.2', 106, '#f09f3b', 'on-tag'],
        ['85128.0', 143, '#e640f2', 'on-dark'],
        ['83623.8', 218, '#74fbfd', 'on-tag'],
        ['273.19K', 463, UP, 'on-tag']
    ];
    let out = '<rect x="0" y="379" width="65" height="1" fill="#2e323f"/>';
    labels.forEach(([label, y]) => {
        out += `<text x="10" y="${y + 5}">${label}</text>`;
    });
    tags.forEach(([label, y, color, cls]) => {
        out += `<rect x="1" y="${y}" width="59" height="17" rx="1" fill="${color}"/>`;
        out += `<text class="${cls}" x="10" y="${y + 13}">${label}</text>`;
    });
    // axis settings
    out += '<g fill="none" stroke="#858891" transform="translate(33 494)"><circle r="5"/><path d="M0-5v-3M0 5v3M-5 0h-3M5 0h3M-3.500-3.500l-2-2M3.500-3.500l2-2M-3.500 3.500l-2 2M3.500 3.500l2 2"/></g>';
    document.getElementById('axis').innerHTML = out;
}

// [price, quantity, total, depth in px]
const asks = [
    ['86,249.8', '1.726', '3.642', 21],
    ['86,242.3', '0.034', '1.916', 12],
    ['86,239.1', '0.069', '1.882', 12],
    ['86,237.7', '0.011', '1.813', 12],
    ['86,233.0', '0.119', '1.802', 12],
    ['86,225.8', '0.579', '1.683', 9],
    ['86,223.3', '1.043', '1.104', 6],
    ['86,223.2', '0.061', '0.061', 0]
];
const bids = [
    ['86,213.0', '0.579', '0.579', 3],
    ['86,210.3', '0.061', '0.640', 3],
    ['86,210.2', '0.011', '0.651', 4],
    ['86,210.1', '0.102', '0.753', 6],
    ['86,207.7', '0.102', '0.855', 6],
    ['86,202.1', '0.102', '0.957', 6],
    ['86,197.4', '0.041', '0.998', 6],
    ['86,197.3', '0.119', '1.117', 7]
];

function fillLevels(id, rows) {
    document.getElementById(id).innerHTML = rows.map(([price, quantity, total, depth]) => `
        <tr style="--depth: ${depth}px">
            <td>${price}</td>
            <td>${quantity}</td>
            <td>${total}</td>
        </tr>
    `).join('');
}

drawPlot();
drawAxis();
fillLevels('asks', asks);
fillLevels('bids', bids);
```
